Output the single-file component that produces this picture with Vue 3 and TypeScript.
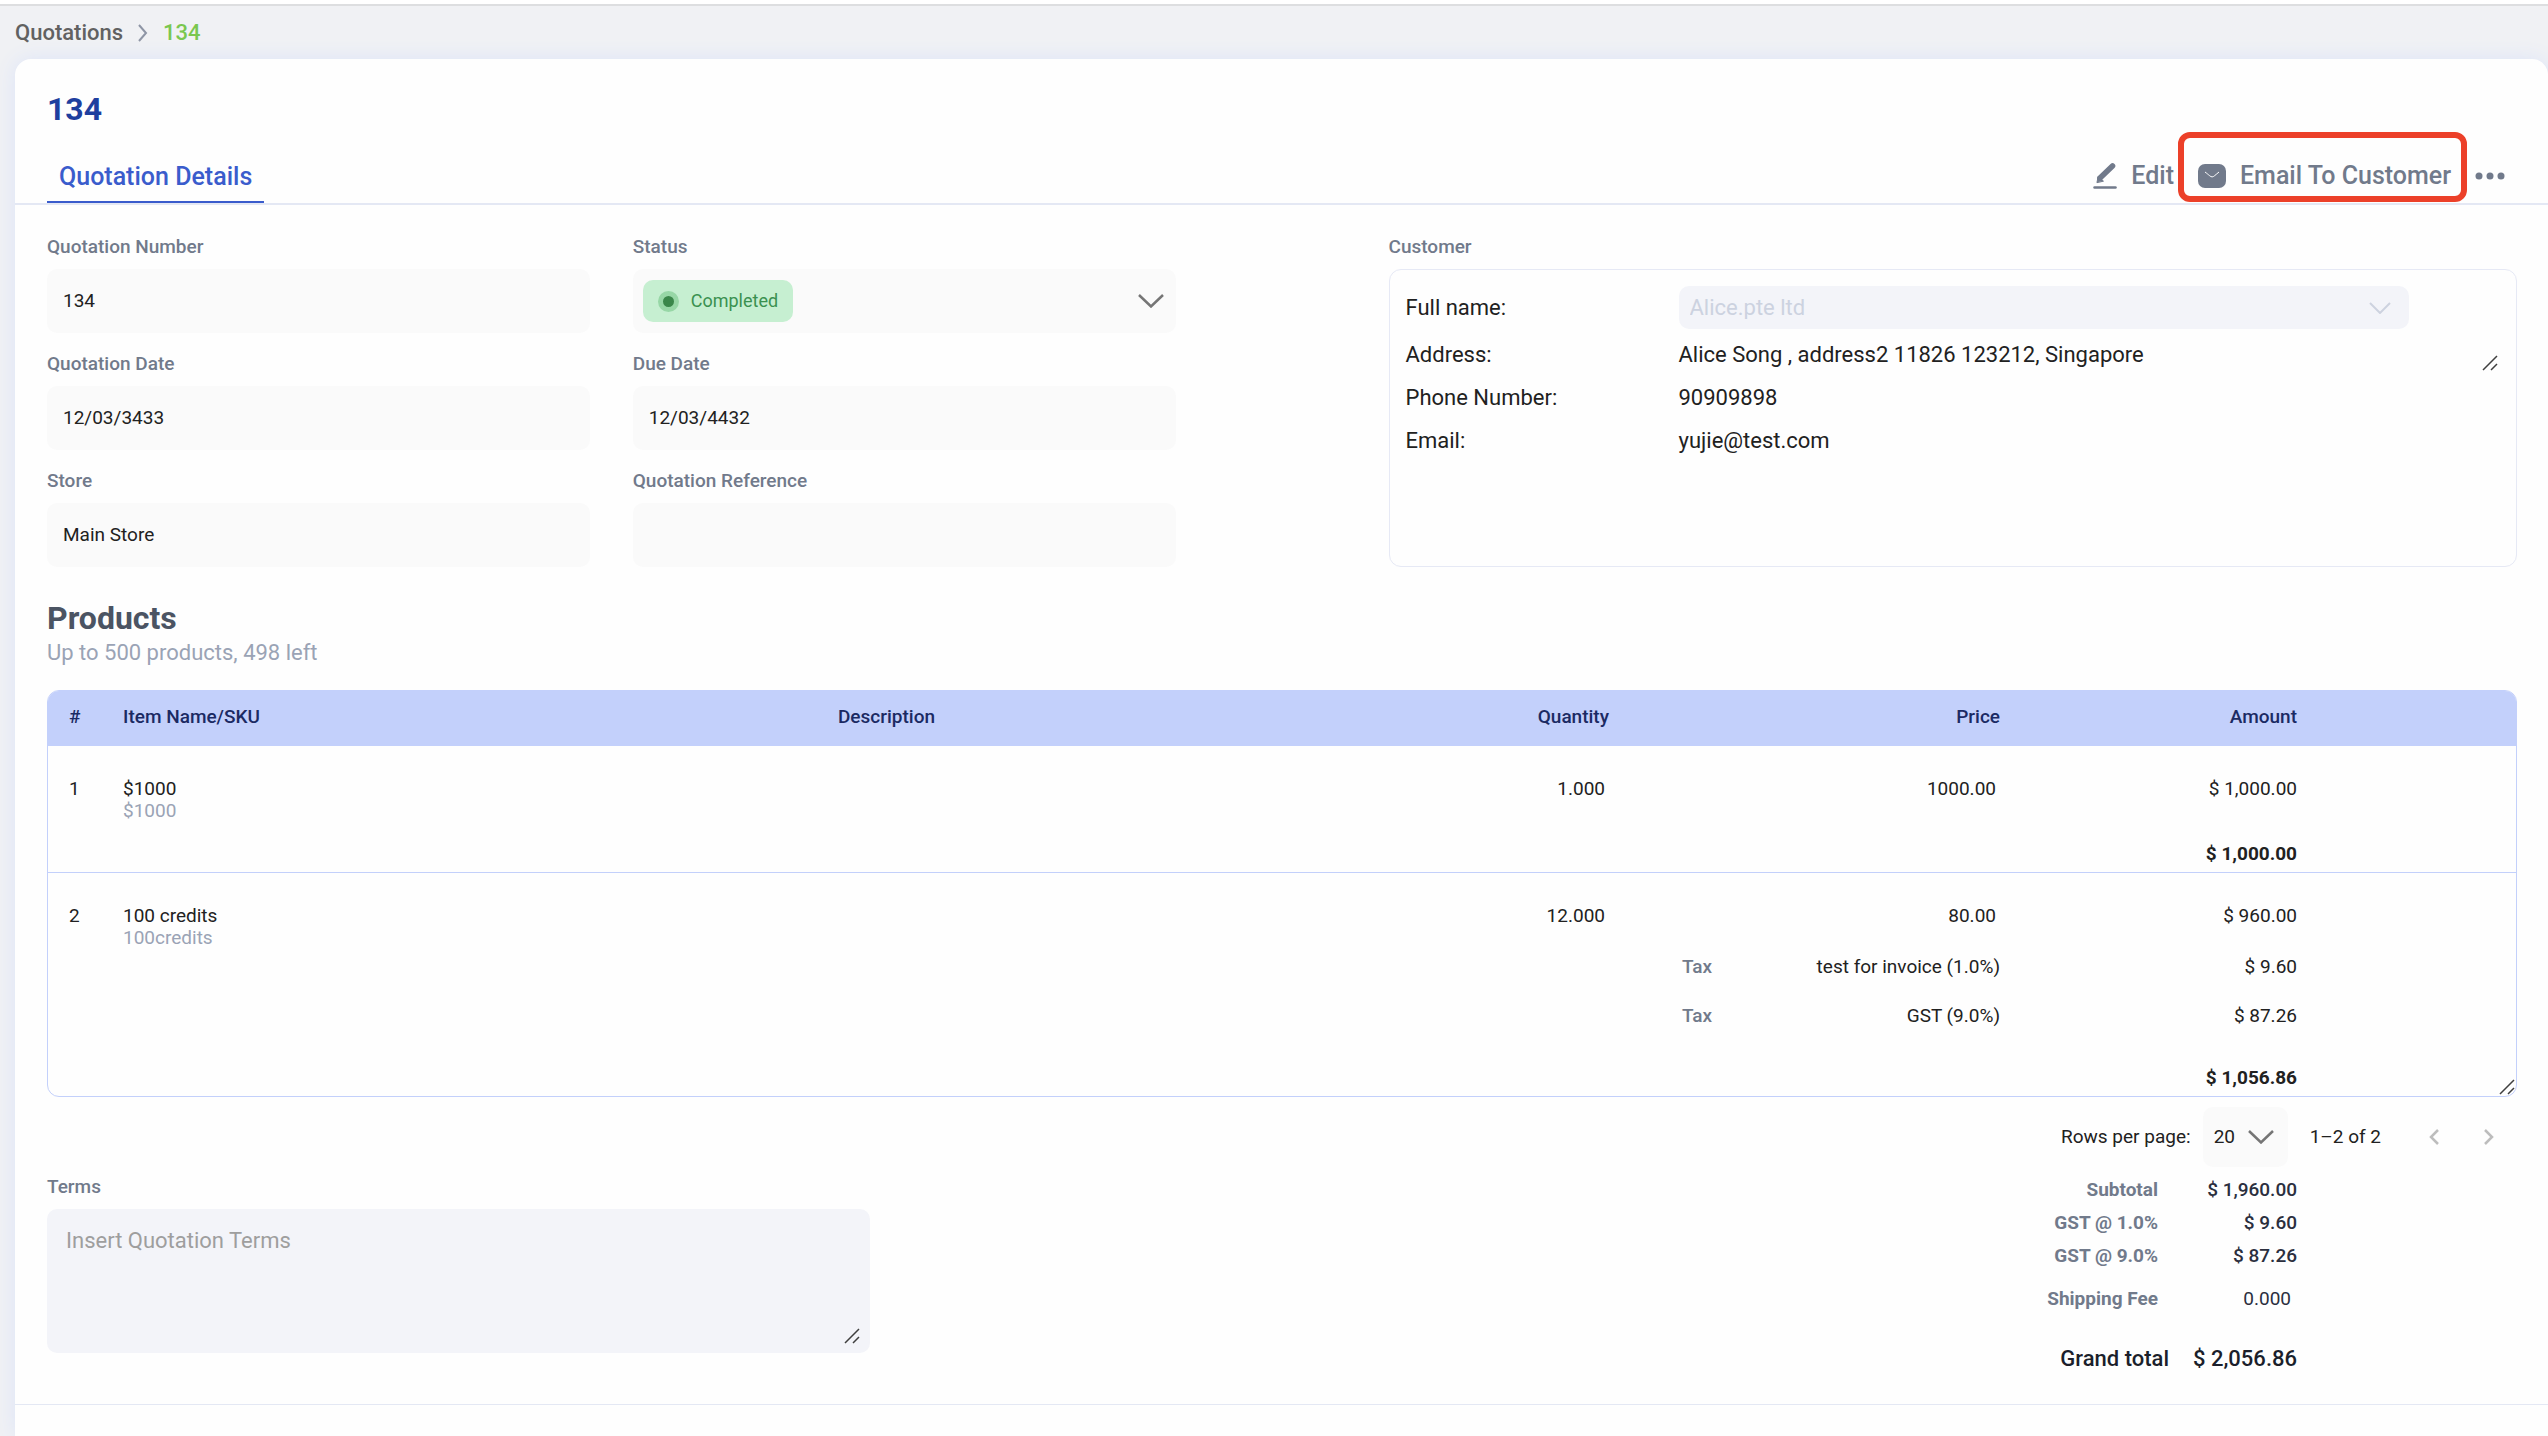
<script setup lang="ts">
import { ref } from 'vue'

interface Tax {
  name: string
  amount: string
}

interface Item {
  name: string
  sku: string
  quantity: string
  price: string
  amount: string
  taxes: Tax[]
  total: string
}

interface Total {
  label: string
  value: string
}

const items: Item[] = [
  { name: '$1000', sku: '$1000', quantity: '1.000', price: '1000.00', amount: '$ 1,000.00', taxes: [], total: '$ 1,000.00' },
  {
    name: '100 credits',
    sku: '100credits',
    quantity: '12.000',
    price: '80.00',
    amount: '$ 960.00',
    taxes: [
      { name: 'test for invoice (1.0%)', amount: '$ 9.60' },
      { name: 'GST (9.0%)', amount: '$ 87.26' },
    ],
    total: '$ 1,056.86',
  },
]

const totals: Total[] = [
  { label: 'Subtotal', value: '$ 1,960.00' },
  { label: 'GST @ 1.0%', value: '$ 9.60' },
  { label: 'GST @ 9.0%', value: '$ 87.26' },
]

const status = ref('Completed')
const pageSize = ref('20')
const terms = ref('')
</script>

<template>
  <div class="page">
    <nav class="crumbs" aria-label="Breadcrumb">
      <a href="#quotations">Quotations</a>
      <svg width="10" height="20" viewBox="0 0 10 20" fill="none" stroke="#8e95a5" stroke-width="2"><path d="M1 2l7 8-7 8" /></svg>
      <a href="#134" class="current" aria-current="page">134</a>
    </nav>

    <main class="card">
      <h1>134</h1>

      <div class="tabbar">
        <button type="button" class="tab">Quotation Details</button>
        <div class="actions">
          <button type="button" class="action">
            <svg width="24" height="28" viewBox="0 0 24 28" stroke="#717a8b" stroke-linecap="round">
              <path d="M1.5 25.5h21" stroke-width="2.5" />
              <path d="M7 16L19.5 4" stroke-width="5.6" />
              <path d="M4 20.3l1.2-6 5 4.6z" fill="#717a8b" stroke="#717a8b" stroke-width="1" stroke-linejoin="round" />
            </svg>
            Edit
          </button>
          <button type="button" class="action email">
            <svg width="28" height="24" viewBox="0 0 28 24" fill="none">
              <rect width="28" height="24" rx="7" fill="#717a8b" />
              <path d="M7 8c2 1.5 3.3 2.6 4.5 3.6 2 1.7 3.3 1.7 5.2 0C18 10.5 19.3 9.5 21 8" stroke="#fff" stroke-width="1" />
            </svg>
            Email To Customer
          </button>
          <button type="button" class="more" aria-label="More actions">
            <svg width="30" height="8" viewBox="0 0 30 8" fill="#717a8b">
              <circle cx="4" cy="4" r="3.5" /><circle cx="15" cy="4" r="3.5" /><circle cx="26" cy="4" r="3.5" />
            </svg>
          </button>
        </div>
      </div>

      <section class="details">
        <div class="fields">
          <div class="field">
            <label for="number">Quotation Number</label>
            <input id="number" type="text" value="134" readonly />
          </div>
          <div class="field">
            <label for="status">Status</label>
            <div class="status">
              <span class="chip"><i class="dot"></i>Completed</span>
              <select id="status" v-model="status"><option>Completed</option></select>
              <svg width="26" height="14" viewBox="0 0 26 14" fill="none" stroke="#757575" stroke-width="2.5"><path d="M1 1l12 11.5L25 1" /></svg>
            </div>
          </div>
          <div class="field">
            <label for="date">Quotation Date</label>
            <input id="date" type="text" value="12/03/3433" readonly />
          </div>
          <div class="field">
            <label for="due">Due Date</label>
            <input id="due" type="text" value="12/03/4432" readonly />
          </div>
          <div class="field">
            <label for="store">Store</label>
            <input id="store" type="text" value="Main Store" readonly />
          </div>
          <div class="field">
            <label for="reference">Quotation Reference</label>
            <input id="reference" type="text" value="" readonly />
          </div>
        </div>

        <div class="customer">
          <h3>Customer</h3>
          <div class="customer-box">
            <label for="fullname">Full name:</label>
            <div class="name-select">
              <select id="fullname" disabled><option>Alice.pte ltd</option></select>
              <svg width="22" height="12" viewBox="0 0 22 12" fill="none" stroke="#cdd2df" stroke-width="2"><path d="M1 1l10 10L21 1" /></svg>
            </div>
            <span>Address:</span>
            <div class="address">
              Alice Song , address2 11826 123212, Singapore
              <svg class="grip" width="16" height="16" viewBox="0 0 16 16" stroke="#3f3f3f" stroke-width="1.5"><path d="M1 15L15 1M9 15l6-6" /></svg>
            </div>
            <span>Phone Number:</span>
            <span>90909898</span>
            <span>Email:</span>
            <span>yujie@test.com</span>
          </div>
        </div>
      </section>

      <section class="products">
        <h2>Products</h2>
        <p>Up to 500 products, 498 left</p>
        <div class="table-box">
          <table>
            <colgroup>
              <col class="c-index" /><col class="c-name" /><col class="c-desc" /><col class="c-qty" />
              <col class="c-tax" /><col class="c-price" /><col class="c-amount" /><col class="c-end" />
            </colgroup>
            <thead>
              <tr>
                <th scope="col">#</th>
                <th scope="col">Item Name/SKU</th>
                <th scope="col">Description</th>
                <th scope="col" class="num">Quantity</th>
                <th scope="col" class="num" colspan="2">Price</th>
                <th scope="col" class="num">Amount</th>
                <td></td>
              </tr>
            </thead>
            <tbody v-for="(item, i) in items" :key="item.name">
              <tr class="item">
                <td>{{ i + 1 }}</td>
                <td>{{ item.name }}<small>{{ item.sku }}</small></td>
                <td></td>
                <td class="num entry">{{ item.quantity }}</td>
                <td></td>
                <td class="num entry">{{ item.price }}</td>
                <td class="num">{{ item.amount }}</td>
                <td></td>
              </tr>
              <tr v-for="tax in item.taxes" :key="tax.name" class="tax">
                <td colspan="4"></td>
                <th scope="row">Tax</th>
                <td class="num">{{ tax.name }}</td>
                <td class="num">{{ tax.amount }}</td>
                <td></td>
              </tr>
              <tr class="sum">
                <td colspan="6"></td>
                <td class="num">{{ item.total }}</td>
                <td></td>
              </tr>
            </tbody>
          </table>
          <svg class="grip" width="16" height="16" viewBox="0 0 16 16" stroke="#3f3f3f" stroke-width="1.5"><path d="M1 15L15 1M9 15l6-6" /></svg>
        </div>

        <div class="pager">
          <label for="size">Rows per page:</label>
          <div class="size">
            <select id="size" v-model="pageSize"><option>20</option></select>
            <svg width="26" height="14" viewBox="0 0 26 14" fill="none" stroke="#757575" stroke-width="2.5"><path d="M1 1l12 11.5L25 1" /></svg>
          </div>
          <span class="range">1–2 of 2</span>
          <button type="button" disabled aria-label="Previous page">
            <svg width="12" height="18" viewBox="0 0 12 18" fill="none" stroke="#bdbdbd" stroke-width="2.5"><path d="M10 2L3 9l7 7" /></svg>
          </button>
          <button type="button" disabled aria-label="Next page">
            <svg width="12" height="18" viewBox="0 0 12 18" fill="none" stroke="#bdbdbd" stroke-width="2.5"><path d="M2 2l7 7-7 7" /></svg>
          </button>
        </div>
      </section>

      <section class="summary">
        <div class="terms">
          <label for="terms">Terms</label>
          <div class="terms-box">
            <textarea id="terms" v-model="terms" placeholder="Insert Quotation Terms"></textarea>
            <svg class="grip" width="16" height="16" viewBox="0 0 16 16" stroke="#3f3f3f" stroke-width="1.5"><path d="M1 15L15 1M9 15l6-6" /></svg>
          </div>
        </div>
        <dl class="totals">
          <div v-for="t in totals" :key="t.label">
            <dt>{{ t.label }}</dt>
            <dd>{{ t.value }}</dd>
          </div>
          <div class="shipping">
            <dt><label for="shipping">Shipping Fee</label></dt>
            <dd><input id="shipping" type="text" value="0.000" readonly /></dd>
          </div>
          <div class="grand">
            <dt>Grand total</dt>
            <dd>$ 2,056.86</dd>
          </div>
        </dl>
      </section>
    </main>
  </div>
</template>

<style>
body {
  background: #f0f1f4;
}
</style>

<style scoped>
* {
  box-sizing: border-box;
}

.page {
  min-height: 100vh;
  display: flex;
  flex-direction: column;
  overflow: hidden;
  border-top: 4px solid #fff;
  background: #f0f1f4;
  color: #212121;
  font: 400 19px/22px Roboto, 'Liberation Sans', sans-serif;
}

button,
input,
select,
textarea {
  margin: 0;
  padding: 0;
  border: 0;
  background: none;
  color: inherit;
  font: inherit;
  appearance: none;
  outline: none;
}

select:disabled {
  opacity: 1;
}

svg {
  display: block;
  flex: none;
}

.crumbs {
  display: flex;
  align-items: center;
  gap: 15px;
  height: 55px;
  padding: 0 15px;
  border-top: 2px solid #dddee0;
  font-size: 22px;
  font-weight: 500;
}

.crumbs a {
  color: #616161;
  text-decoration: none;
}

.crumbs .current {
  color: #7ac74f;
}

.card {
  flex: 1;
  margin-left: 15px;
  border-radius: 16px 16px 0 0;
  background: #fefefe;
  box-shadow: 0 0 20px #dce4f8;
}

h1 {
  margin: 0;
  padding: 32px 32px 0;
  color: #1e3f9e;
  font-size: 32px;
  font-weight: 700;
  line-height: 36px;
}

.tabbar {
  display: flex;
  justify-content: space-between;
  height: 78px;
  padding: 22px 43px 0 32px;
  border-bottom: 2px solid #e4e8f4;
}

.tab {
  padding: 4px 12px 0;
  border-bottom: 2px solid #3a5ccc;
  color: #3a5ccc;
  font-size: 25px;
  font-weight: 500;
}

.actions {
  display: flex;
  align-items: center;
  color: #717a8b;
  font-size: 25px;
  font-weight: 500;
}

.action {
  position: relative;
  display: flex;
  align-items: center;
  gap: 14px;
}

.email {
  margin-left: 24px;
}

.email::after {
  content: '';
  position: absolute;
  inset: -32px -16px -14px -20px;
  border: 6px solid #ec4029;
  border-radius: 12px;
}

.more {
  margin-left: 24px;
}

.details {
  display: grid;
  grid-template-columns: 1fr 1fr;
  gap: 213px;
  padding: 31px 31px 0 32px;
}

.fields {
  display: grid;
  grid-template-columns: 1fr 1fr;
  gap: 20px 43px;
}

.field label,
.customer h3,
.terms label {
  display: block;
  margin: 0 0 11px;
  color: #717a8b;
  font-size: 19px;
  font-weight: 500;
}

.field input,
.status {
  display: block;
  width: 100%;
  height: 64px;
  padding: 0 16px 2px;
  border-radius: 10px;
  background: #fafafa;
}

.status {
  display: flex;
  align-items: center;
  justify-content: space-between;
  position: relative;
  padding: 0 12px 0 10px;
}

.status select {
  position: absolute;
  inset: 0;
  width: 100%;
  opacity: 0;
}

.chip {
  display: flex;
  align-items: center;
  gap: 12px;
  height: 42px;
  padding: 0 15px;
  border-radius: 10px;
  background: #c6efd1;
  color: #3a9150;
  font-size: 18px;
}

.dot {
  width: 21px;
  height: 21px;
  border: 5px solid #97d7a6;
  border-radius: 50%;
  background: #3a874a;
}

.customer {
  display: flex;
  flex-direction: column;
}

.customer-box {
  flex: 1;
  display: grid;
  grid-template-columns: 273px 1fr;
  grid-auto-rows: minmax(43px, auto);
  align-content: start;
  align-items: center;
  padding: 16px;
  border: 1px solid #e6e9f5;
  border-radius: 12px;
  font-size: 22px;
}

.customer-box > label,
.name-select {
  margin-bottom: 4px;
}

.name-select {
  display: flex;
  align-items: center;
  width: 730px;
  height: 43px;
  padding: 0 18px 0 11px;
  border-radius: 10px;
  background: #f3f4f9;
  color: #ccd2e0;
}

.name-select select {
  flex: 1;
}

.address {
  display: flex;
  align-items: center;
  justify-content: space-between;
  padding-right: 2px;
}

.address .grip {
  margin-top: 16px;
}

.products {
  padding: 33px 31px 0 32px;
}

h2 {
  margin: 0;
  color: #4b5463;
  font-size: 32px;
  font-weight: 700;
  line-height: 36px;
}

.products p {
  margin: 0 0 20px;
  color: #9aa3b5;
  font-size: 22px;
  line-height: 34px;
}

.table-box {
  position: relative;
  border: 1px solid #c3d0fb;
  border-radius: 12px;
  overflow: hidden;
}

table {
  width: 100%;
  border-collapse: collapse;
  table-layout: fixed;
}

.c-index { width: 75px; }
.c-desc { width: 28%; }
.c-qty { width: 80px; }
.c-tax { width: 180px; }
.c-price { width: 211px; }
.c-amount { width: 297px; }
.c-end { width: 219px; }

th,
td {
  padding: 0;
  text-align: left;
  vertical-align: top;
  font-weight: 400;
}

thead tr {
  height: 55px;
  background: #c3d0fb;
  color: #1b2a63;
}

thead th {
  padding-bottom: 4px;
  vertical-align: middle;
  font-weight: 500;
}

tr > :first-child:not([colspan]) {
  padding-left: 21px;
}

.num {
  text-align: right;
}

.num.entry {
  padding-right: 4px;
}

tbody + tbody {
  border-top: 1px solid #c3d0fb;
}

.item {
  height: 83px;
}

.item td {
  padding-top: 32px;
}

.item small {
  display: block;
  color: #9aa3b5;
  font-size: 19px;
}

.tax {
  height: 49px;
}

.tax td,
.tax th {
  padding-top: 1px;
}

.tax th {
  padding-left: 73px;
  color: #717a8b;
  font-weight: 500;
}

.sum {
  height: 43px;
}

.sum td {
  padding-top: 14px;
  font-weight: 700;
}

.table-box .grip,
.terms-box .grip {
  position: absolute;
  right: 1px;
  bottom: 1px;
}

.pager {
  display: flex;
  align-items: center;
  justify-content: flex-end;
  height: 79px;
  padding-right: 22px;
}

.size {
  display: flex;
  align-items: center;
  width: 85px;
  height: 60px;
  margin: 0 22px 0 12px;
  padding: 0 14px 0 11px;
  border-radius: 10px;
  background: #fafafa;
}

.size select {
  flex: 1;
}

.pager button {
  margin-left: 43px;
}

.pager .range + button {
  margin-left: 47px;
}

.summary {
  display: flex;
  justify-content: space-between;
  padding: 0 31px 23px 32px;
  border-bottom: 1px solid #e4e8f4;
}

.terms {
  width: 823px;
}

.terms-box {
  position: relative;
}

textarea {
  display: block;
  width: 100%;
  height: 144px;
  padding: 21px 19px;
  border-radius: 10px;
  background: #f3f4f9;
  font-size: 22px;
  resize: none;
}

textarea::placeholder {
  color: #9e9e9e;
}

.terms-box .grip {
  right: 10px;
  bottom: 9px;
}

.totals {
  margin: 0;
  padding: 3px 220px 0 0;
}

.totals > div {
  display: flex;
  justify-content: flex-end;
  height: 33px;
}

dt {
  color: #717a8b;
  font-weight: 700;
}

dd {
  width: 139px;
  margin: 0;
  color: #2b2f3e;
  font-weight: 500;
  text-align: right;
}

.totals .shipping {
  margin-top: 10px;
}

.shipping input {
  display: block;
  width: 100%;
  padding-right: 6px;
  font-weight: 400;
  text-align: right;
}

.totals .grand {
  margin-top: 27px;
  font-size: 22px;
}

.grand dt,
.grand dd {
  color: #1b1f2b;
  font-weight: 500;
}

.grand dd {
  width: 128px;
}
</style>
